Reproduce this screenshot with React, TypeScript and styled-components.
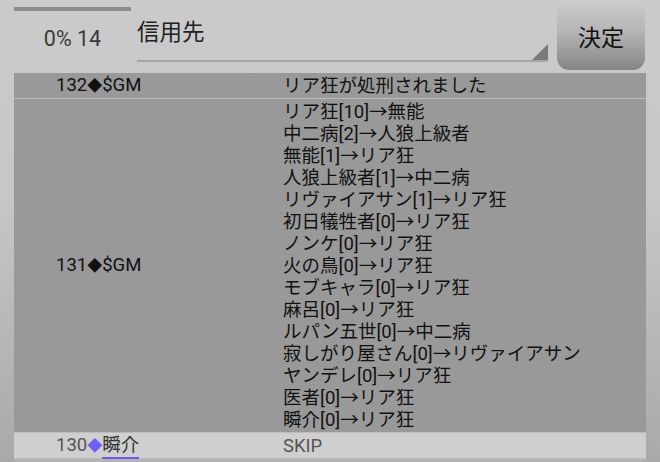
import styled, { createGlobalStyle } from "styled-components";

const Global = createGlobalStyle`
  html, body {
    margin: 0;
    padding: 0;
  }
  body {
    width: 660px;
    height: 462px;
    overflow: hidden;
    background: linear-gradient(#cbcbcb 0px, #c6c6c6 200px, #a9a9a9 462px);
    font-family: Roboto, "Noto Sans CJK JP", sans-serif;
  }
`;

const Screen = styled.div`
  display: flex;
  flex-direction: column;
  width: 660px;
  height: 462px;
`;

const Header = styled.div`
  display: flex;
  align-items: flex-start;
  height: 72px;
  background: #cacaca;
`;

const Progress = styled.div`
  display: flex;
  flex-direction: column;
  align-items: center;
  width: 117px;
  margin: 7px 0 0 14px;
`;

const Bar = styled.div`
  width: 100%;
  height: 4px;
  background: #8d8d8d;
`;

const Count = styled.div`
  margin-top: 15px;
  font-size: 21.5px;
  line-height: 26px;
  color: #3a3a3a;
`;

const Spinner = styled.div`
  position: relative;
  flex: 1;
  height: 43px;
  margin: 17px 9px 0 6px;
  border-bottom: 2px solid #a6a6a6;
  font-size: 22.5px;
  line-height: 30px;
  color: #222;

  &::after {
    content: "";
    position: absolute;
    right: 0;
    bottom: 0;
    width: 0;
    height: 0;
    border-left: 16px solid transparent;
    border-bottom: 16px solid #7a7a7a;
  }
`;

const Button = styled.button`
  width: 88px;
  height: 69px;
  margin: 1px 15px 0 0;
  border: none;
  border-radius: 12px;
  background: linear-gradient(#cccccc 0%, #b4b4b4 45%, #858585 100%);
  font-family: Roboto, "Noto Sans CJK JP", sans-serif;
  font-size: 23px;
  color: #111;
  padding: 0;
`;

const Table = styled.div`
  display: flex;
  flex-direction: column;
  width: 632px;
  margin: 1px 0 0 14px;
  border-bottom: 3px solid #b3b3b3;
`;

const Row = styled.div<{ $light?: boolean }>`
  display: flex;
  align-items: center;
  background: ${(p) => (p.$light ? "#cfcfcf" : "#999999")};
  border-bottom: 1px solid ${(p) => (p.$light ? "#bdbdbd" : "#bcbcbc")};
  font-size: 18.5px;
  line-height: 22px;
  color: ${(p) => (p.$light ? "#555" : "#111")};
`;

const Who = styled.div`
  width: 269px;
  padding-left: 42px;
  box-sizing: border-box;
  white-space: nowrap;
`;

const Lines = styled.div<{ $pad?: number }>`
  display: flex;
  flex-direction: column;
  padding: ${(p) => p.$pad ?? 1.5}px 0;
`;

const Diamond = styled.span<{ $color: string }>`
  font-size: 15px;
  color: ${(p) => p.$color};
`;

const Name = styled.span`
  color: #333;
  border-bottom: 2px solid #6b5cf0;
  padding-bottom: 1px;
`;

const votes = [
  "リア狂[10]→無能",
  "中二病[2]→人狼上級者",
  "無能[1]→リア狂",
  "人狼上級者[1]→中二病",
  "リヴァイアサン[1]→リア狂",
  "初日犠牲者[0]→リア狂",
  "ノンケ[0]→リア狂",
  "火の鳥[0]→リア狂",
  "モブキャラ[0]→リア狂",
  "麻呂[0]→リア狂",
  "ルパン五世[0]→中二病",
  "寂しがり屋さん[0]→リヴァイアサン",
  "ヤンデレ[0]→リア狂",
  "医者[0]→リア狂",
  "瞬介[0]→リア狂",
];

export default function App() {
  return (
    <Screen>
      <Global />
      <Header>
        <Progress>
          <Bar />
          <Count>0% 14</Count>
        </Progress>
        <Spinner>信用先</Spinner>
        <Button>決定</Button>
      </Header>
      <Table>
        <Row>
          <Who>
            132<Diamond $color="#111">◆</Diamond>$GM
          </Who>
          <Lines $pad={1.5}>
            <div>リア狂が処刑されました</div>
          </Lines>
        </Row>
        <Row>
          <Who>
            131<Diamond $color="#111">◆</Diamond>$GM
          </Who>
          <Lines>
            {votes.map((v) => (
              <div key={v}>{v}</div>
            ))}
          </Lines>
        </Row>
        <Row $light>
          <Who>
            130<Diamond $color="#6f5ff5">◆</Diamond>
            <Name>瞬介</Name>
          </Who>
          <Lines>
            <div>SKIP</div>
          </Lines>
        </Row>
      </Table>
    </Screen>
  );
}
